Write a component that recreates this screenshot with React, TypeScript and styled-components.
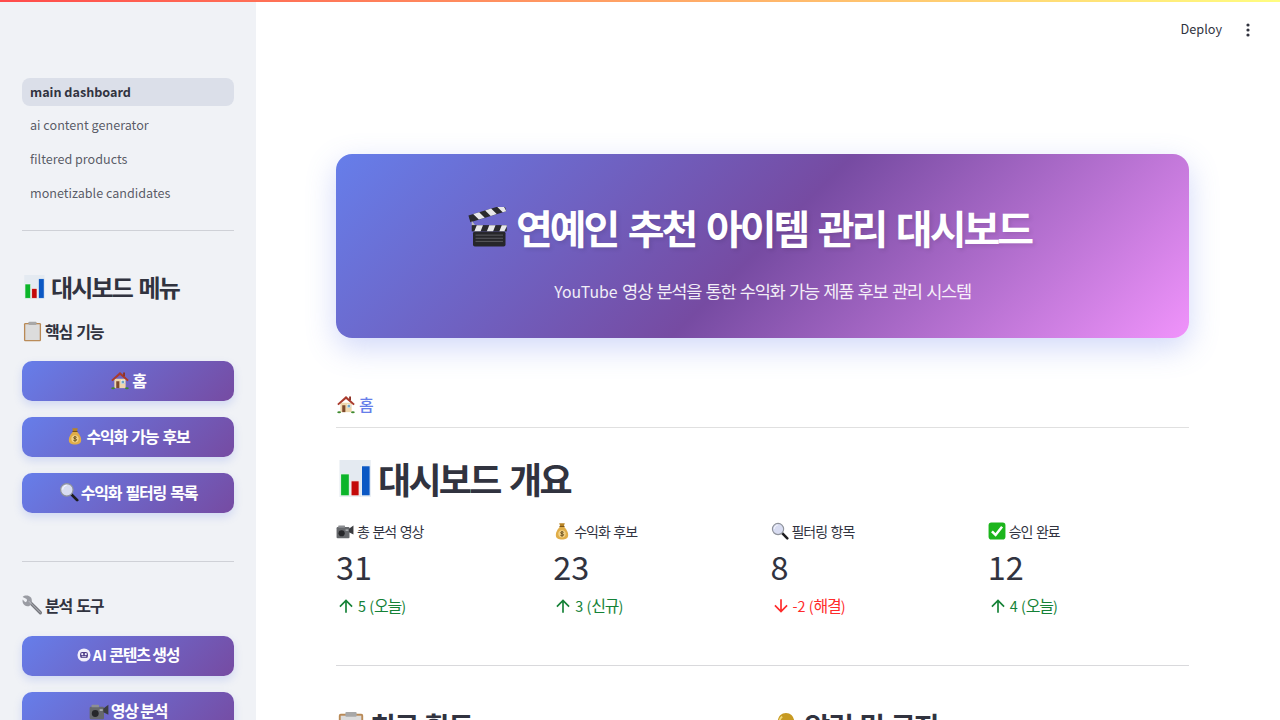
import React from "react";
import styled, { createGlobalStyle, css } from "styled-components";

const Global = createGlobalStyle`
  html, body { margin: 0; padding: 0; height: 100%; overflow: hidden; background: #fff; }
  body { font-family: "Noto Sans CJK KR", "Noto Sans", sans-serif; color: #31333f; }
  * { box-sizing: border-box; }
`;

const tightHangul = css`
  letter-spacing: -0.075em;
  word-spacing: 0.11em;
`;

const Page = styled.div`
  position: relative;
  display: flex;
  width: 1280px;
  height: 720px;
  overflow: hidden;
`;

const Rainbow = styled.div`
  position: absolute;
  inset: 0 0 auto 0;
  height: 2px;
  background: linear-gradient(90deg, rgb(255, 75, 75), rgb(255, 253, 128));
`;

const Sidebar = styled.aside`
  flex: 0 0 256px;
  height: 720px;
  overflow: hidden;
  background: #f0f2f6;
  padding: 78px 22px 0;
`;

const Nav = styled.nav`
  display: flex;
  flex-direction: column;
  gap: 6px;
`;

const NavItem = styled.div<{ $active?: boolean }>`
  height: 28px;
  padding: 0 8px ${(p) => (p.$active ? 2 : 4)}px;
  border-radius: 8px;
  display: flex;
  align-items: center;
  font-size: 12.6px;
  font-weight: ${(p) => (p.$active ? 700 : 400)};
  color: ${(p) => (p.$active ? "#31333f" : "rgba(49, 51, 63, 0.8)")};
  background: ${(p) => (p.$active ? "#dbdfe9" : "transparent")};
`;

const SideRule = styled.hr<{ $top: number; $bottom: number }>`
  border: 0;
  height: 1px;
  background: #cfd1d7;
  margin: ${(p) => p.$top}px 0 ${(p) => p.$bottom}px;
`;

const SideTitle = styled.h2`
  ${tightHangul}
  display: flex;
  align-items: center;
  gap: 5px;
  margin: 0;
  font-size: 24px;
  line-height: 32px;
  font-weight: 600;
  color: #31333f;
`;

const SideSub = styled.h3<{ $top: number; $bottom: number }>`
  ${tightHangul}
  display: flex;
  align-items: center;
  gap: 2px;
  margin: ${(p) => p.$top}px 0 ${(p) => p.$bottom}px;
  font-size: 16px;
  line-height: 24px;
  font-weight: 600;
  color: #31333f;
`;

const SideButtons = styled.div`
  display: flex;
  flex-direction: column;
  gap: 16px;
`;

const SideButton = styled.button`
  display: flex;
  align-items: center;
  justify-content: center;
  gap: 2px;
  width: 100%;
  height: 40px;
  flex: none;
  border: 0;
  border-radius: 10px;
  padding: 0 0 2px;
  font: 600 16px/24px "Noto Sans CJK KR", sans-serif;
  ${tightHangul}
  color: #fff;
  background: linear-gradient(135deg, #667eea 0%, #764ba2 100%);
  box-shadow: 0 4px 8px rgba(102, 126, 234, 0.22);
`;

const ToolLabel = styled.span`
  word-spacing: 0;
  margin-bottom: 2px;
`;

const Main = styled.main`
  flex: 1;
  height: 720px;
  overflow: hidden;
`;

const Toolbar = styled.header`
  height: 60px;
  display: flex;
  align-items: center;
  justify-content: flex-end;
  padding-right: 24px;
  gap: 18px;
`;

const Deploy = styled.span`
  font-size: 12.7px;
  margin-bottom: 4px;
  color: #31333f;
`;

const Content = styled.div`
  padding: 94px 91px 0 80px;
`;

const Banner = styled.section`
  height: 184px;
  border-radius: 16px;
  background: linear-gradient(135deg, #667eea 0%, #764ba2 50%, #f093fb 100%);
  box-shadow: 0 10px 30px rgba(102, 126, 234, 0.3);
  color: #fff;
  display: flex;
  flex-direction: column;
  align-items: center;
  padding-top: 45px;
`;

const BannerTitle = styled.h1`
  ${tightHangul}
  display: flex;
  align-items: center;
  gap: 8px;
  margin: 0;
  padding-right: 26px;
  font-size: 40px;
  line-height: 56px;
  font-weight: 700;
  text-shadow: 2px 2px 4px rgba(0, 0, 0, 0.1);
`;

const BannerSub = styled.p`
  ${tightHangul}
  margin: 23px 0 0;
  font-size: 17.6px;
  line-height: 26px;
  opacity: 0.9;
`;

const Latin = styled.span`
  font-size: 0.9em;
  letter-spacing: 0;
  word-spacing: 0;
`;

const Crumb = styled.div`
  ${tightHangul}
  display: flex;
  align-items: center;
  gap: 3px;
  margin-top: 54px;
  height: 36px;
  padding-bottom: 11px;
  border-bottom: 1px solid #e0e0e0;
  font-size: 16px;
  font-weight: 500;
  line-height: 24px;
  color: #667eea;
`;

const PageTitle = styled.h2`
  ${tightHangul}
  display: flex;
  align-items: center;
  gap: 5px;
  margin: 24px 0 0;
  font-size: 36px;
  line-height: 52px;
  font-weight: 600;
  color: #31333f;
`;

const Metrics = styled.div`
  display: grid;
  grid-template-columns: repeat(4, 1fr);
  gap: 16px;
  margin-top: 17px;
`;

const Metric = styled.div`
  display: flex;
  flex-direction: column;
`;

const MetricLabel = styled.div`
  ${tightHangul}
  display: flex;
  align-items: center;
  gap: 3px;
  font-size: 14px;
  line-height: 20px;
  color: #31333f;
`;

const MetricValue = styled.div`
  font-size: 32.4px;
  line-height: 50px;
  padding-bottom: 2px;
  color: #31333f;
`;

const Delta = styled.div<{ $down?: boolean }>`
  ${tightHangul}
  display: flex;
  align-items: center;
  gap: 2px;
  font-size: 16px;
  line-height: 24px;
  color: ${(p) => (p.$down ? "#ff2b2b" : "#158237")};
`;

const MainRule = styled.hr`
  border: 0;
  height: 1px;
  background: #d9d9dc;
  margin: 47px 0 0;
`;

const Columns = styled.div`
  display: grid;
  grid-template-columns: 1fr 1fr;
  gap: 16px;
  margin-top: 40px;
`;

const ColumnTitle = styled.h3`
  ${tightHangul}
  display: flex;
  align-items: center;
  gap: 4px;
  margin: 0;
  font-size: 28px;
  line-height: 40px;
  font-weight: 600;
  color: #31333f;
`;

const DeltaArrow = styled.svg`
  flex: none;
  width: 20px;
  height: 20px;
`;

const EmojiSvg = styled.svg<{ $size: number }>`
  flex: none;
  width: ${(p) => p.$size}px;
  height: ${(p) => p.$size}px;
`;

const Arrow = ({ down }: { down?: boolean }) => (
  <DeltaArrow viewBox="0 0 24 24" fill="currentColor" aria-hidden>
    {down ? (
      <path d="M20 12l-1.41-1.41L13 16.17V4h-2v12.17l-5.58-5.59L4 12l8 8 8-8z" />
    ) : (
      <path d="M4 12l1.41 1.41L11 7.83V20h2V7.83l5.58 5.59L20 12l-8-8-8 8z" />
    )}
  </DeltaArrow>
);

const Kebab = () => (
  <svg width="16" height="16" viewBox="0 0 16 16" fill="#31333f" aria-hidden>
    <circle cx="8" cy="3" r="1.6" />
    <circle cx="8" cy="8" r="1.6" />
    <circle cx="8" cy="13" r="1.6" />
  </svg>
);

const drawings: Record<string, React.ReactNode> = {
  house: (
    <>
      <rect x="7" y="14" width="18" height="15" fill="#efd7ad" />
      <path d="M2 16 16 3l14 13-2 2L16 8 4 18z" fill="#a93a2c" />
      <rect x="21" y="4" width="3" height="6" fill="#8f3226" />
      <rect x="10" y="18" width="5" height="11" fill="#7d4a2c" />
      <rect x="18" y="17" width="5" height="5" fill="#6fa6c8" stroke="#fff" strokeWidth="0.7" />
      <ellipse cx="5" cy="29" rx="3" ry="1.6" fill="#3f8a2e" />
      <ellipse cx="27" cy="29" rx="3" ry="1.6" fill="#3f8a2e" />
    </>
  ),
  chart: (
    <>
      <rect x="3" y="0" width="27" height="32" fill="#e4eaf1" />
      <rect x="4" y="12" width="7.5" height="19" fill="#0cb52a" stroke="#f4f7f7" strokeWidth="0.8" />
      <rect x="13" y="18" width="7" height="13" fill="#c40a0a" stroke="#f4f7f7" strokeWidth="0.8" />
      <rect x="22" y="5" width="7.5" height="26" fill="#0b58c4" stroke="#f4f7f7" strokeWidth="0.8" />
    </>
  ),
  clipboard: (
    <>
      <rect x="3" y="3" width="26" height="28" rx="2" fill="#b98a56" />
      <rect x="5" y="5" width="22" height="24" fill="#dcdcdc" />
      <rect x="10" y="1" width="12" height="5" rx="1" fill="#a8a8a8" />
    </>
  ),
  clapper: (
    <>
      <g transform="rotate(-17 4 12)">
        <rect x="2" y="6" width="30" height="5.5" fill="#2a2a2e" />
        <path d="M6 6h5l3 5.500h-5zM16 6h5l3 5.500h-5zM26 6h5l1 5.500h-3z" fill="#e8e8ea" />
      </g>
      <path d="M3 11 6 15 3 15z" fill="#bcbcc0" />
      <rect x="3" y="14.500" width="28" height="5" fill="#2a2a2e" />
      <path d="M7 14.500h5l-2 5H5zM17 14.500h5l-2 5h-5zM27 14.500h4v1l-2 4h-4z" fill="#e8e8ea" />
      <rect x="4" y="19.500" width="26" height="12" rx="1.500" fill="#26262a" />
      <path d="M6 22.500h22M6 25h22M6 27.500h22" stroke="#6b6b70" strokeWidth="0.6" />
    </>
  ),
  money: (
    <>
      <path d="M11 2h10l-2 6h-6z" fill="#b98526" />
      <rect x="11.500" y="7" width="9" height="2" fill="#7a5518" />
      <path d="M12 9c-5 5-7 10-7 14 0 6 5 8 11 8s11-2 11-8c0-4-2-9-7-14z" fill="#e0ad48" />
      <circle cx="16" cy="21" r="6.500" fill="#f3d489" />
      <path d="M19 18.500c-1.500-1.500-5.500-1.500-5.500.7s5.500 1.300 5.500 3.600c0 2.200-4.500 2.200-6 .7M16 16v10" fill="none" stroke="#5d4214" strokeWidth="1.500" />
    </>
  ),
  search: (
    <>
      <path d="M19 19 29 29" stroke="#1c1c1f" strokeWidth="4.500" strokeLinecap="round" />
      <circle cx="12.500" cy="12.500" r="10" fill="#d8dcf1" stroke="#8f939c" strokeWidth="2" />
      <path d="M6 12c0-4 3-6.500 6-6.500" fill="none" stroke="#fff" strokeWidth="1.500" />
    </>
  ),
  camera: (
    <>
      <rect x="1" y="9" width="23" height="20" rx="2" fill="#66686c" />
      <path d="M23 12 31 6v16l-8-4z" fill="#3b3c40" />
      <rect x="4" y="6" width="12" height="4" rx="1" fill="#8d8f93" />
      <circle cx="10" cy="20" r="5.500" fill="#26272a" />
      <rect x="17" y="13" width="5" height="3" fill="#a5a7aa" />
    </>
  ),
  check: (
    <>
      <rect x="1" y="1" width="30" height="30" rx="5" fill="#1cb51c" />
      <path d="M7 16.500 13.500 23 25 8.500" fill="none" stroke="#fff" strokeWidth="4.500" />
    </>
  ),
  wrench: (
    <>
      <path d="M10 9 28 27" stroke="#77797f" strokeWidth="5" strokeLinecap="round" />
      <path d="M14 4C10 0 4 0 1 3l6 3 1 3-3 2-4-4c-1 5 2 10 7 10 5 1 9-6 6-13z" fill="#9a9ca3" />
      <path d="M10 9 28 27" stroke="#c8cad0" strokeWidth="1.200" />
    </>
  ),
  robot: (
    <>
      <circle cx="16" cy="16" r="15" fill="#f1eefa" />
      <rect x="7" y="9" width="18" height="14" rx="5" fill="#4f3e8a" />
      <circle cx="12" cy="14" r="2.500" fill="#f1eefa" />
      <circle cx="20" cy="14" r="2.500" fill="#f1eefa" />
      <rect x="11" y="19" width="10" height="2" fill="#f1eefa" />
    </>
  ),
  bell: (
    <>
      <path d="M16 2c-6 0-9 5-9 11 0 6-3 9-4 11h26c-1-2-4-5-4-11 0-6-3-11-9-11z" fill="#c79a22" />
      <path d="M12 6c-2 1-3 4-3 7" fill="none" stroke="#f0d878" strokeWidth="2" />
      <circle cx="16" cy="27" r="3.500" fill="#8a6a14" />
    </>
  ),
};

const Emoji = ({ name, size }: { name: string; size: number }) => (
  <EmojiSvg $size={size} viewBox="0 0 32 32" aria-hidden>
    {drawings[name]}
  </EmojiSvg>
);

const navItems = ["main dashboard", "ai content generator", "filtered products", "monetizable candidates"];
const coreButtons = [
  { icon: "house", size: 20, label: "홈" },
  { icon: "money", size: 18, label: "수익화 가능 후보" },
  { icon: "search", size: 20, label: "수익화 필터링 목록" },
];
const metrics = [
  { icon: "camera", label: "총 분석 영상", value: "31", delta: "5", note: "오늘" },
  { icon: "money", label: "수익화 후보", value: "23", delta: "3", note: "신규" },
  { icon: "search", label: "필터링 항목", value: "8", delta: "-2", note: "해결", down: true },
  { icon: "check", label: "승인 완료", value: "12", delta: "4", note: "오늘" },
];

export default function App() {
  return (
    <Page>
      <Global />
      <Sidebar>
        <Nav>
          {navItems.map((n, i) => (
            <NavItem key={n} $active={i === 0}>{n}</NavItem>
          ))}
        </Nav>
        <SideRule $top={22} $bottom={40} />
        <SideTitle><Emoji name="chart" size={24} />대시보드 메뉴</SideTitle>
        <SideSub $top={16} $bottom={18}><Emoji name="clipboard" size={21} />핵심 기능</SideSub>
        <SideButtons>
          {coreButtons.map((b) => (
            <SideButton key={b.label}><Emoji name={b.icon} size={b.size} />{b.label}</SideButton>
          ))}
        </SideButtons>
        <SideRule $top={48} $bottom={31} />
        <SideSub $top={0} $bottom={19}><Emoji name="wrench" size={21} />분석 도구</SideSub>
        <SideButtons>
          <SideButton><Emoji name="robot" size={14} /><ToolLabel><Latin>AI</Latin> 콘텐츠 생성</ToolLabel></SideButton>
          <SideButton><Emoji name="camera" size={20} /><ToolLabel>영상 분석</ToolLabel></SideButton>
        </SideButtons>
      </Sidebar>
      <Main>
        <Toolbar>
          <Deploy>Deploy</Deploy>
          <Kebab />
        </Toolbar>
        <Content>
          <Banner>
            <BannerTitle><Emoji name="clapper" size={40} />연예인 추천 아이템 관리 대시보드</BannerTitle>
            <BannerSub><Latin>YouTube</Latin> 영상 분석을 통한 수익화 가능 제품 후보 관리 시스템</BannerSub>
          </Banner>
          <Crumb><Emoji name="house" size={20} />홈</Crumb>
          <PageTitle><Emoji name="chart" size={37} />대시보드 개요</PageTitle>
          <Metrics>
            {metrics.map((m) => (
              <Metric key={m.label}>
                <MetricLabel><Emoji name={m.icon} size={18} />{m.label}</MetricLabel>
                <MetricValue>{m.value}</MetricValue>
                <Delta $down={m.down}>
                  <Arrow down={m.down} />
                  <span><Latin>{m.delta} (</Latin>{m.note}<Latin>)</Latin></span>
                </Delta>
              </Metric>
            ))}
          </Metrics>
          <MainRule />
          <Columns>
            <ColumnTitle><Emoji name="clipboard" size={30} />최근 활동</ColumnTitle>
            <ColumnTitle><Emoji name="bell" size={30} />알림 및 공지</ColumnTitle>
          </Columns>
        </Content>
      </Main>
      <Rainbow />
    </Page>
  );
}
